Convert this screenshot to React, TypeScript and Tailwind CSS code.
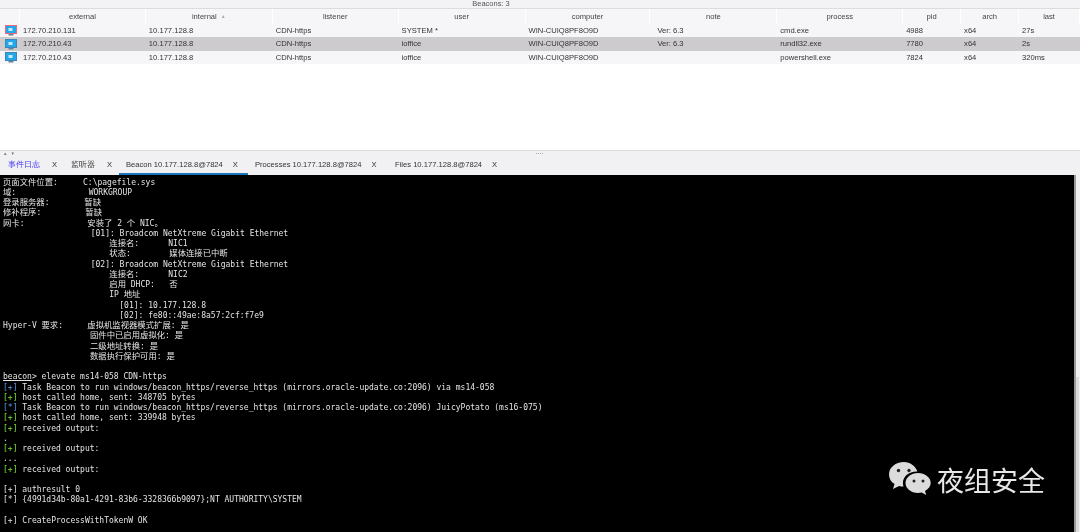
const cols = [
  { name: "external", w: 126 },
  { name: "internal", w: 127, sort: true },
  { name: "listener", w: 126 },
  { name: "user", w: 127 },
  { name: "computer", w: 125 },
  { name: "note", w: 127, pad: true },
  { name: "process", w: 126 },
  { name: "pid", w: 58 },
  { name: "arch", w: 58 },
  { name: "last", w: 61 },
];

const rows = [
  { v: ["172.70.210.131", "10.177.128.8", "CDN-https", "SYSTEM *", "WIN-CUIQ8PF8O9D", "Ver: 6.3", "cmd.exe", "4988", "x64", "27s"], admin: true, bg: "bg-[#f6f5f8]" },
  { v: ["172.70.210.43", "10.177.128.8", "CDN-https", "ioffice", "WIN-CUIQ8PF8O9D", "Ver: 6.3", "rundll32.exe", "7780", "x64", "2s"], bg: "bg-[#cdcbcd]" },
  { v: ["172.70.210.43", "10.177.128.8", "CDN-https", "ioffice", "WIN-CUIQ8PF8O9D", "", "powershell.exe", "7824", "x64", "320ms"], bg: "bg-[#f6f5f8]" },
];

function Monitor({ admin }: { admin?: boolean }) {
  return (
    <svg width="12" height="11" viewBox="0 0 12 11">
      <rect x="0.5" y="0.5" width="11" height="8" fill="#22a6ec" stroke={admin ? "#f0667a" : "#3b86b5"} />
      <rect x="3.5" y="3" width="4" height="3" fill="#c8ecfb" />
      <rect x="3.5" y="9" width="5" height="1.5" fill="#6d7f90" />
    </svg>
  );
}

const tabs = [
  { t: "事件日志", w: 63, c: "text-[#3d35f5] text-[7.5px]", gap: "gap-[12px]" },
  { t: "监听器", w: 55, c: "text-[7.5px]", gap: "gap-[12px]" },
  { t: "Beacon 10.177.128.8@7824", w: 129, active: true, gap: "gap-[10px]" },
  { t: "Processes 10.177.128.8@7824", w: 140, gap: "gap-[10px]" },
  { t: "Files 10.177.128.8@7824", w: 120, gap: "gap-[10px]" },
];

type Seg = { t: string; c?: string; u?: boolean };
type Col = [number, string];
const BLUE = "text-[#5a9cf0]";
const GREEN = "text-[#7be82e]";

// Info block: each row is a list of [x position, text]; the columns come from the data.
const info: Col[][] = [
  [[3, "页面文件位置:"], [83, "C:\\pagefile.sys"]],
  [[3, "域:"], [88.7, "WORKGROUP"]],
  [[3, "登录服务器:"], [84.3, "暂缺"]],
  [[3, "修补程序:"], [85.3, "暂缺"]],
  [[3, "网卡:"], [87.3, "安装了 2 个 NIC。"]],
  [[90.7, "[01]: Broadcom NetXtreme Gigabit Ethernet"]],
  [[109.3, "连接名:"], [168.3, "NIC1"]],
  [[109.3, "状态:"], [169.3, "媒体连接已中断"]],
  [[90.7, "[02]: Broadcom NetXtreme Gigabit Ethernet"]],
  [[109.3, "连接名:"], [168.3, "NIC2"]],
  [[109.3, "启用 DHCP:"], [169.3, "否"]],
  [[109.3, "IP 地址"]],
  [[119.3, "[01]: 10.177.128.8"]],
  [[119.3, "[02]: fe80::49ae:8a57:2cf:f7e9"]],
  [[3, "Hyper-V 要求:"], [87.3, "虚拟机监视器模式扩展: 是"]],
  [[90, "固件中已启用虚拟化: 是"]],
  [[90, "二级地址转换: 是"]],
  [[90, "数据执行保护可用: 是"]],
];

const log: (string | Seg[])[] = [
  "",
  [{ t: "beacon", u: true }, { t: "> elevate ms14-058 CDN-https" }],
  [{ t: "[+]", c: BLUE }, { t: " Task Beacon to run windows/beacon_https/reverse_https (mirrors.oracle-update.co:2096) via ms14-058" }],
  [{ t: "[+]", c: GREEN }, { t: " host called home, sent: 348705 bytes" }],
  [{ t: "[*]", c: BLUE }, { t: " Task Beacon to run windows/beacon_https/reverse_https (mirrors.oracle-update.co:2096) JuicyPotato (ms16-075)" }],
  [{ t: "[+]", c: GREEN }, { t: " host called home, sent: 339948 bytes" }],
  [{ t: "[+]", c: GREEN }, { t: " received output:" }],
  ".",
  [{ t: "[+]", c: GREEN }, { t: " received output:" }],
  "...",
  [{ t: "[+]", c: GREEN }, { t: " received output:" }],
  "",
  "[+] authresult 0",
  "[*] {4991d34b-80a1-4291-83b6-3328366b9097};NT AUTHORITY\\SYSTEM",
  "",
  "[+] CreateProcessWithTokenW OK",
];

function Cjk({ text }: { text: string }) {
  const parts = text.split(/([\u3000-\u9fff]+)/);
  return (
    <>
      {parts.map((p, i) =>
        /[\u3000-\u9fff]/.test(p) ? <span key={i} className="text-[8.35px] leading-[0px]">{p}</span> : <span key={i}>{p}</span>
      )}
    </>
  );
}

export default function App() {
  return (
    <div className="w-[1080px] h-[532px] overflow-hidden flex flex-col bg-[#f3f2f4] font-['Liberation_Sans',sans-serif] text-[#333] blur-[0.3px]">
      <div className="h-[8px] w-[982px] shrink-0 text-center text-[7.5px] leading-[8px] text-[#555]">Beacons: 3</div>
      <div className="h-[143px] shrink-0 bg-white border-y border-[#dcdcdc]">
        <div className="flex h-[15px] bg-[#f6f5f7] text-[7.6px] leading-[15px]">
          <div className="w-[20px] border-r border-white" />
          {cols.map((c) => (
            <div key={c.name} style={{ width: c.w }} className="border-r border-white text-center text-[#444]">
              {c.name}
              {c.sort && <span className="ml-1 text-[5px] text-[#aaa] align-[1px]">▲</span>}
            </div>
          ))}
        </div>
        {rows.map((r, i) => (
          <div key={i} className={`flex h-[13.25px] items-center pt-[0.5px] text-[7.6px] ${r.bg}`}>
            <div className="w-[20px] flex pl-[5px]"><Monitor admin={r.admin} /></div>
            {r.v.map((t, j) => (
              <div key={j} style={{ width: cols[j].w }} className={`whitespace-nowrap ${cols[j].pad ? "pl-[7px]" : "pl-[3px]"}`}>{t}</div>
            ))}
          </div>
        ))}
      </div>
      <div className="h-[24px] shrink-0 flex flex-col bg-[#f1f0f2]">
        <div className="h-[5px] flex items-center pl-[3px] text-[#777]">
          <span className="text-[4.5px] leading-[5px] w-[533px] tracking-[3px]">▲▼</span>
          <div className="flex gap-px">
            <div className="size-px bg-[#aaa]" /><div className="size-px bg-[#aaa]" /><div className="size-px bg-[#aaa]" /><div className="size-px bg-[#aaa]" />
          </div>
        </div>
        <div className="flex h-[19px] pl-px">
          {tabs.map((t) => (
            <div key={t.t} style={{ width: t.w }} className={`flex items-center pl-[7px] ${t.gap} text-[7.6px] whitespace-nowrap border-b-2 ${t.active ? "border-[#1b75bc]" : "border-transparent"}`}>
              <span className={t.c}>{t.t}</span>
              <span>X</span>
            </div>
          ))}
        </div>
      </div>
      <div className="flex-1 flex min-h-0">
        <div className="relative flex-1 bg-black overflow-hidden pt-[2.5px] font-['DejaVu_Sans_Mono','Noto_Sans_CJK_SC',monospace] text-[8px] leading-[10.25px] text-[#e4e4e4] whitespace-pre">
          {info.map((row, i) => (
            <div key={i} className="h-[10.25px] flex items-baseline" style={{ paddingLeft: row[0][0] }}>
              {row.map(([x, t], j) => {
                const next = row[j + 1];
                return (
                  <span key={j} style={next ? { width: next[0] - x } : undefined} className="shrink-0">
                    <Cjk text={t} />
                  </span>
                );
              })}
            </div>
          ))}
          <div className="pl-[3px]">
            {log.map((l, i) => (
              <div key={i} className="h-[10.25px]">
                {typeof l === "string" ? l : l.map((s, j) => (
                  <span key={j} className={`${s.c ?? ""} ${s.u ? "underline" : ""}`}>{s.t}</span>
                ))}
              </div>
            ))}
          </div>
          <div className="absolute left-[888px] top-[286px] flex items-center gap-[5px] font-['Noto_Sans_CJK_SC',sans-serif] text-[27px] leading-[30px] text-[#e8e8e8]">
            <svg width="44" height="38" viewBox="0 0 44 38">
              <path d="M16 1C7.5 1 1 6.5 1 13.5c0 4 2 7.3 5.5 9.6L5 28l6-3c1.5.4 3 .6 4.5.6-.4-1.2-.6-2.4-.6-3.6 0-6.5 6-11.6 13.5-11.6h1C27.5 5 22 1 16 1z" fill="#dcdcdc" />
              <path d="M30 12c-7 0-12.5 4.5-12.5 10S23 32 30 32c1.2 0 2.5-.2 3.7-.5l4.5 2.5-1.2-4c3.5-2 5.7-4.8 5.7-8 0-5.5-5.7-10-12.7-10z" fill="#dcdcdc" />
              <circle cx="10.5" cy="9.5" r="1.7" fill="#222" /><circle cx="21" cy="9.5" r="1.7" fill="#222" />
              <circle cx="26" cy="20" r="1.5" fill="#222" /><circle cx="35" cy="20" r="1.5" fill="#222" />
            </svg>
            <span>夜组安全</span>
          </div>
        </div>
        <div className="w-[6px] flex flex-col border-l-2 border-[#9a999b] bg-[#f0eff2]">
          <div className="h-[202px]" />
          <div className="flex-1 mr-px bg-[#dbdadd]" />
        </div>
      </div>
    </div>
  );
}
